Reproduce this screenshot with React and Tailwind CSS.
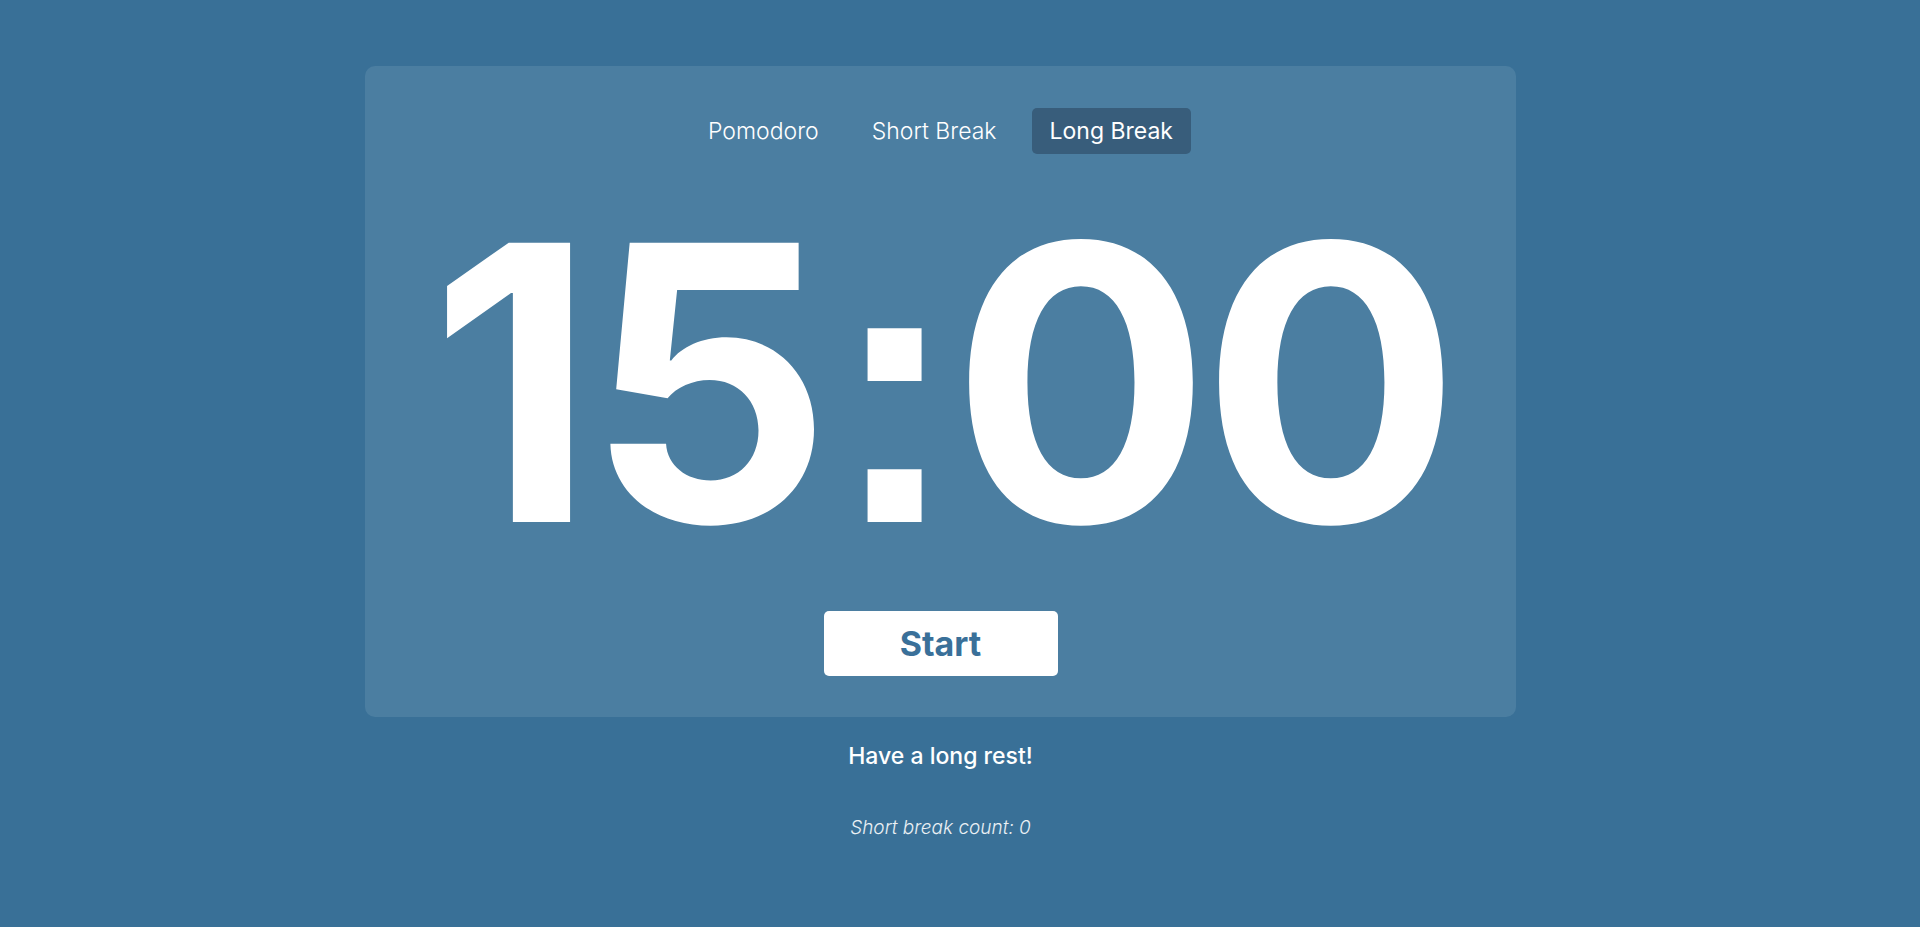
import React, { useState } from "react";

const tabs = ["Pomodoro", "Short Break", "Long Break"];

const App = () => {
  const [mode, setMode] = useState("Long Break");

  return (
    <div
      className="w-full min-h-screen bg-[#397097] flex flex-col items-center pt-[66px] pr-[39px] text-white"
      style={{ fontFamily: "Inter, 'Noto Sans', sans-serif" }}
    >
      <div className="w-[1151px] rounded-[10px] bg-[#4b7ea1] flex flex-col items-center pt-[42px] pb-[41px]">
        <div className="flex gap-[17px]">
          {tabs.map((t) => (
            <button
              key={t}
              onClick={() => setMode(t)}
              className={
                mode === t
                  ? "h-[46px] px-[18px] rounded-[5px] bg-[#385d7b] text-[23px] font-normal text-white"
                  : "h-[46px] px-[18px] rounded-[5px] text-[23px] font-light text-white"
              }
            >
              {t}
            </button>
          ))}
        </div>

        <div className="mt-[37px] text-[384px] font-bold leading-[1] tracking-[-9px]">
          15
          <span
            className="ml-[8px] mr-[2px]"
            style={{ fontFamily: "'Liberation Sans', sans-serif" }}
          >
            :
          </span>
          00
        </div>

        <button className="mt-[30px] w-[234px] h-[65px] rounded-[5px] bg-white text-[#3a7099] text-[34px] font-bold">
          Start
        </button>
      </div>

      <div className="mt-[22px] text-[23px] font-medium">Have a long rest!</div>
      <div className="mt-[40px] text-[19px] font-light italic text-white/90">
        Short break count: 0
      </div>
    </div>
  );
};

export default App;
